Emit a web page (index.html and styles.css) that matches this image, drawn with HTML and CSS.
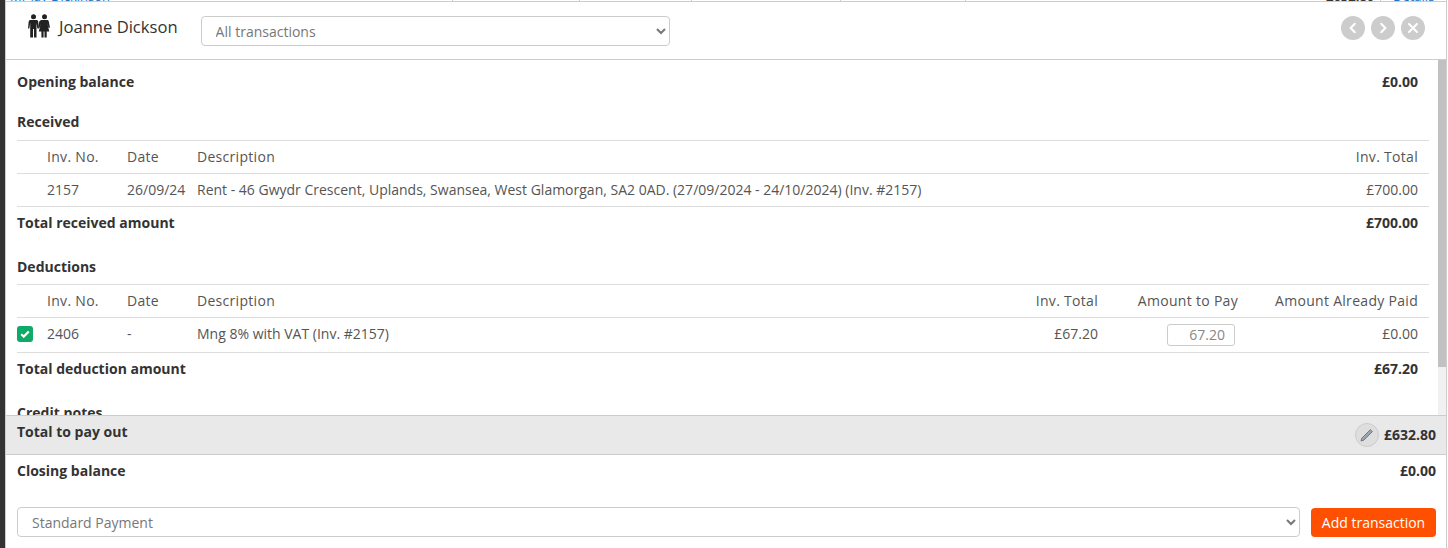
FILE: index.html
```html
<!DOCTYPE html>
<html lang="en">
<head>
<meta charset="utf-8">
<title>Joanne Dickson</title>
<link rel="stylesheet" href="styles.css">
</head>
<body>
<div class="edge"></div>
<div class="modal">
  <div class="behind">
    <span class="b b1 link">Mr Jay Dickinson</span>
    <span class="b b2">£0.00</span>
    <span class="b b3">£0.00</span>
    <span class="b b4">£67.20</span>
    <span class="b b5">£0.00</span>
    <span class="b b6">£0.00</span>
    <span class="b b7 strong">£632.80</span>
    <span class="b b8 link">Details</span>
  </div>
  <header class="head">
    <svg class="people" width="22" height="24" viewBox="0 0 22 24" aria-hidden="true">
      <circle cx="5.5" cy="2.8" r="2.5"/>
      <path d="M2.6 6h5.8c1 0 1.6.6 1.8 1.5l.7 7h-1.5l-.9-5.6v14.6H6v-8.5H5v8.5H2.2V8.9l-.9 5.6H0l.7-7C.9 6.6 1.6 6 2.6 6z"/>
      <circle cx="16.5" cy="2.8" r="2.5"/>
      <path d="M14 6h5c.9 0 1.5.5 1.8 1.4l1.2 6.4h-1.4l-1.3-4.6 2 8.3h-2.6v6h-2.2v-6h-.9v6h-2.2v-6h-2.6l2-8.3-1.3 4.6h-1.4l1.2-6.4C12.5 6.5 13.1 6 14 6z"/>
    </svg>
    <h1 class="name">Joanne Dickson</h1>
    <select class="sel sel-top"><option>All transactions</option></select>
    <div class="nav">
      <span class="circ"><svg width="12" height="12" viewBox="0 0 12 12"><path d="M7.8 1.8 3.6 6l4.2 4.2" /></svg></span>
      <span class="circ"><svg width="12" height="12" viewBox="0 0 12 12"><path d="M4.2 1.8 8.4 6l-4.2 4.2" /></svg></span>
      <span class="circ"><svg width="12" height="12" viewBox="0 0 12 12"><path d="M2 2l8 8M10 2l-8 8" /></svg></span>
    </div>
  </header>
  <div class="body-wrap">
    <main class="scroll">
      <div class="line first"><b>Opening balance</b><b class="pad">£0.00</b></div>
      <h2 class="sec sec-rec">Received</h2>
      <table class="tbl">
        <colgroup><col class="c1"><col class="c2"><col class="c3"><col></colgroup>
        <thead><tr><th></th><th>Inv. No.</th><th>Date</th><th>Description</th><th class="r">Inv. Total</th></tr></thead>
        <tbody><tr><td></td><td>2157</td><td>26/09/24</td><td>Rent - 46 Gwydr Crescent, Uplands, Swansea, West Glamorgan, SA2 0AD. (27/09/2024 - 24/10/2024) (Inv. #2157)</td><td class="r">£700.00</td></tr></tbody>
      </table>
      <div class="line total"><b>Total received amount</b><b class="pad">£700.00</b></div>
      <h2 class="sec sec-ded">Deductions</h2>
      <table class="tbl tbl-ded">
        <colgroup><col class="c1"><col class="c2"><col class="c3"><col><col class="c5"><col class="c6"><col class="c7"></colgroup>
        <thead><tr><th></th><th>Inv. No.</th><th>Date</th><th>Description</th><th class="r">Inv. Total</th><th class="r">Amount to Pay</th><th class="r">Amount Already Paid</th></tr></thead>
        <tbody><tr class="row-ded">
          <td class="chk"><span class="check"><svg width="10" height="8" viewBox="0 0 10 8"><path d="M1.2 4.2 3.8 6.6 8.8 1.4"/></svg></span></td>
          <td>2406</td><td>-</td><td>Mng 8% with VAT (Inv. #2157)</td><td class="r">£67.20</td>
          <td class="r amt-cell"><input class="amt" type="text" value="67.20" aria-label="Amount to pay"></td>
          <td class="r">£0.00</td></tr></tbody>
      </table>
      <div class="line total"><b>Total deduction amount</b><b class="pad">£67.20</b></div>
      <h2 class="sec sec-cred">Credit notes</h2>
    </main>
    <div class="track"><div class="thumb"></div></div>
  </div>
  <section class="band">
    <b class="band-label">Total to pay out</b>
    <span class="pencil"><svg width="14" height="14" viewBox="0 0 14 14"><path d="M10.4 1.6l2 2-8.6 8.6-2.8.8.8-2.8z"/></svg></span>
    <b class="band-val">£632.80</b>
  </section>
  <div class="closing"><b>Closing balance</b><b>£0.00</b></div>
  <footer class="foot">
    <select class="sel sel-foot"><option>Standard Payment</option></select>
    <button class="btn" type="button">Add transaction</button>
  </footer>
</div>
</body>
</html>
```
FILE: styles.css
```css
* { box-sizing: border-box; }
html, body { height: 100%; }
body {
  margin: 0;
  display: flex;
  height: 548px;
  overflow: hidden;
  background: #fff;
  font-family: "Open Sans", "Noto Sans", sans-serif;
  font-size: 14px;
  color: #555;
}
.edge { width: 5px; background: #333; flex: none; }
.modal {
  width: 1442px;
  flex: none;
  display: flex;
  flex-direction: column;
  background: #fff;
  border-left: 1px solid #ccc;
  border-right: 1px solid #ccc;
}
.behind {
  height: 2px;
  flex: none;
  overflow: hidden;
  border-bottom: 1px solid #ccc;
  font-size: 10px;
  line-height: 10px;
  color: #666;
  position: relative;
}
.b { position: absolute; top: -9px; white-space: nowrap; padding-right: 6px; border-right: 1px solid #ccc; }
.link { color: #1a73c0; font-size: 13px; border-right: 0; }
.strong { color: #333; font-weight: 700; font-size: 13px; }
.b1 { left: 4px; }
.b2 { left: 414px; }
.b3 { left: 541px; }
.b4 { left: 648px; }
.b5 { left: 802px; }
.b6 { left: 927px; }
.b7 { left: 1320px; }
.b8 { left: 1387px; }
.head {
  height: 58px;
  flex: none;
  display: flex;
  align-items: flex-start;
  border-bottom: 1px solid #ccc;
}
.people { margin: 12px 0 0 22px; flex: none; fill: #222; }
.name {
  margin: 14px 0 0 9px;
  font-size: 16.6px;
  font-weight: 400;
  line-height: 22px;
  color: #333;
  white-space: nowrap;
}
.sel {
  background: #fff;
  border: 1px solid #ccc;
  border-radius: 4px;
  font-family: inherit;
  font-size: 14px;
  color: #777;
  padding: 0 10px;
}
.sel-top { width: 469px; height: 30px; margin: 14px 0 0 23px; }
.nav { margin: 14px 0 0 auto; display: flex; gap: 6px; padding-right: 21px; }
.circ {
  width: 24px; height: 24px; border-radius: 50%;
  background: #ccc;
  display: flex; align-items: center; justify-content: center;
}
.circ svg { fill: none; stroke: #fff; stroke-width: 2; stroke-linecap: round; stroke-linejoin: round; }
.body-wrap { height: 355px; flex: none; display: flex; overflow: hidden; }
.scroll {
  flex: 1;
  min-width: 0;
  padding: 0 9px 0 11px;
}
.track { width: 8px; flex: none; background: #f1f1f1; }
.thumb { height: 307px; background: #c1c1c1; }
b { color: #333; font-weight: 700; }
.line { display: flex; justify-content: space-between; line-height: 18px; }
.pad { padding-right: 11px; }
.first { margin-top: 13px; }
.sec { margin: 0; font-size: 14px; line-height: 18px; font-weight: 700; color: #333; }
.sec-rec { margin-top: 22px; margin-bottom: 9px; }
.sec-ded { margin-top: 26px; margin-bottom: 8px; }
.sec-cred { margin-top: 26px; }
.tbl { width: 100%; border-collapse: collapse; table-layout: fixed; border-top: 1px solid #ddd; }
.tbl th, .tbl td {
  padding: 0 0 2px;
  height: 33px;
  text-align: left;
  font-weight: 400;
  border-bottom: 1px solid #ddd;
  color: #555;
  white-space: nowrap;
}
.tbl th { letter-spacing: .3px; }
.tbl .r { text-align: right; padding-right: 11px; }
.c1 { width: 30px; }
.c2 { width: 80px; }
.c3 { width: 70px; }
.c5 { width: 130px; }
.c6 { width: 140px; }
.c7 { width: 191px; }
.tbl-ded th:nth-child(5), .tbl-ded th:nth-child(6),
.tbl-ded td:nth-child(5), .tbl-ded td:nth-child(6) { padding-right: 0; }
.row-ded td { height: 35px; padding-bottom: 4px; }
.row-ded .chk { padding-bottom: 2px; }
.row-ded .amt-cell { padding-bottom: 1px; }
.check {
  width: 16px; height: 16px;
  border-radius: 3px;
  background: #0fa968;
  display: flex; align-items: center; justify-content: center;
}
.check svg { fill: none; stroke: #fff; stroke-width: 2.2; }
.amt {
  width: 68px; height: 22px;
  display: inline-block;
  vertical-align: middle;
  margin-right: 3px;
  border: 1px solid #ccc;
  border-radius: 3px;
  text-align: right;
  font: 14px "Open Sans", sans-serif;
  color: #888;
  padding: 0 9px 0 0;
}
.total { margin-top: 7px; }
.band {
  height: 40px;
  flex: none;
  background: #e9e9e9;
  border-top: 1px solid #ccc;
  border-bottom: 1px solid #ccc;
  display: flex;
  align-items: center;
  padding: 0 10px 0 11px;
}
.band-label { margin-right: auto; position: relative; top: -4px; }
.band-val { position: relative; top: -1px; }
.pencil {
  width: 24px; height: 24px; border-radius: 50%;
  background: #dedede;
  border: 1px solid #ccc;
  display: flex; align-items: center; justify-content: center;
  margin-right: 5px;
}
.pencil svg { fill: #9aa7b2; stroke: #666; stroke-width: .8; stroke-linejoin: round; }
.closing {
  display: flex;
  justify-content: space-between;
  padding: 7px 10px 0 11px;
  line-height: 18px;
}
.foot { display: flex; gap: 11px; padding: 27px 10px 0 11px; align-items: flex-start; }
.sel-foot { flex: 1; height: 30px; }
.btn {
  height: 29px;
  width: 125px;
  margin-top: 1px;
  background: #ff4f00;
  color: #fff;
  border: 0;
  border-radius: 4px;
  font: 14px "Open Sans", sans-serif;
  padding: 0;
}
```
